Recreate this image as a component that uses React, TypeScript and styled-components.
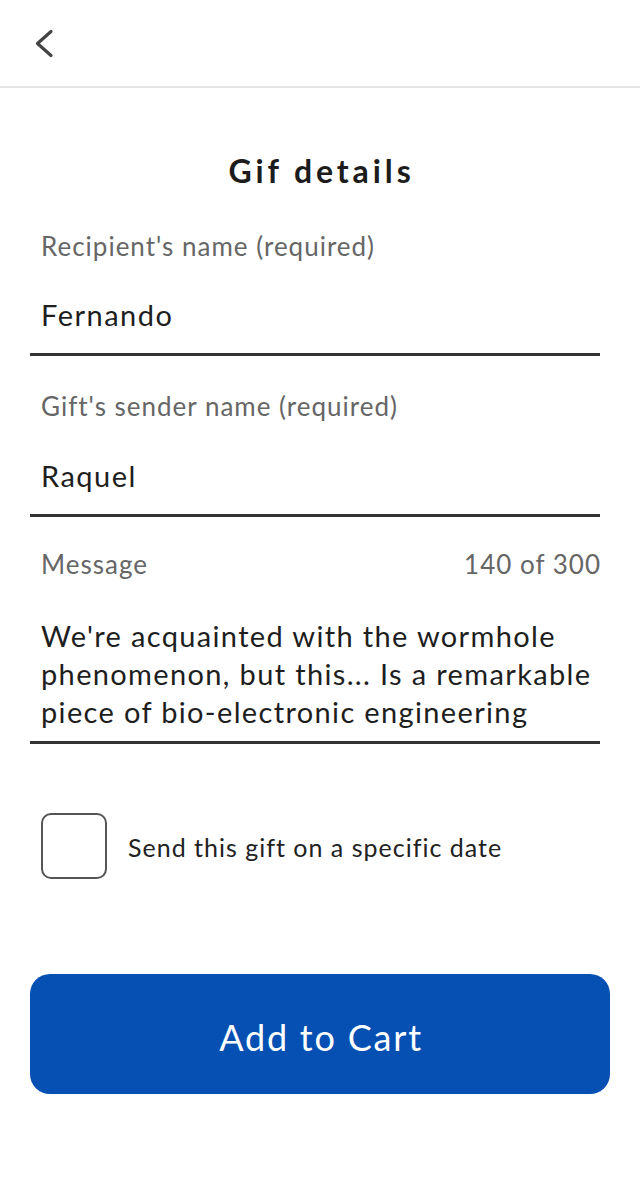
import React from "react";
import styled, { createGlobalStyle } from "styled-components";

const GlobalStyle = createGlobalStyle`
  html, body {
    margin: 0;
    padding: 0;
    background: #ffffff;
  }
  body {
    font-family: Lato, "Open Sans", Arial, sans-serif;
    color: #222222;
  }
  * { box-sizing: border-box; }
`;

const Page = styled.div`
  width: 640px;
  min-height: 1180px;
  background: #ffffff;
  display: flex;
  flex-direction: column;
`;

const Header = styled.header`
  height: 88px;
  border-bottom: 2px solid #e6e6e6;
  display: flex;
  align-items: flex-start;
  padding: 27px 0 0 33px;
`;

const BackButton = styled.button`
  width: 24px;
  height: 33px;
  padding: 0;
  border: none;
  background: transparent;
  display: flex;
  align-items: center;
  justify-content: center;
  cursor: pointer;
`;

const Main = styled.main`
  padding: 0 30px;
  display: flex;
  flex-direction: column;
`;

const Title = styled.h1`
  margin: 63px 0 0;
  padding-left: 3px;
  font-family: Lato, sans-serif;
  font-size: 32px;
  line-height: 40px;
  font-weight: 700;
  letter-spacing: 3.9px;
  text-align: center;
  color: #1c1c1c;
`;

const Form = styled.form`
  margin-top: 40px;
  margin-right: 10px;
  display: flex;
  flex-direction: column;
`;

const Field = styled.label<{ $gap?: number; $padBottom?: number }>`
  display: flex;
  flex-direction: column;
  margin-bottom: ${(p) => p.$gap ?? 34}px;
  border-bottom: 3px solid #333333;
  padding-bottom: ${(p) => p.$padBottom ?? 19}px;
`;

const LabelRow = styled.div`
  display: flex;
  justify-content: space-between;
  align-items: baseline;
  padding-left: 11px;
`;

const LabelText = styled.span<{ $end?: boolean }>`
  font-size: 26px;
  line-height: 30px;
  letter-spacing: 1px;
  color: #666666;
  margin-right: ${(p) => (p.$end ? "-1px" : "0")};
`;

const Input = styled.input<{ $offset?: number }>`
  margin-top: ${(p) => p.$offset ?? 34}px;
  padding: 0 0 0 11px;
  border: none;
  outline: none;
  background: transparent;
  font-family: Lato, sans-serif;
  font-size: 29px;
  line-height: 38px;
  letter-spacing: 1.5px;
  height: 38px;
  color: #1e1e1e;
  width: 100%;
`;

const TextArea = styled.textarea`
  margin-top: 38px;
  padding: 0 0 0 11px;
  border: none;
  outline: none;
  background: transparent;
  resize: none;
  overflow: hidden;
  font-family: Lato, sans-serif;
  font-size: 29px;
  line-height: 38px;
  letter-spacing: 1.35px;
  height: 114px;
  color: #1e1e1e;
  width: 100%;
  display: block;
`;

const CheckRow = styled.label`
  margin-top: 69px;
  padding-left: 11px;
  display: flex;
  align-items: center;
  gap: 21px;
  cursor: pointer;
`;

const CheckBox = styled.input`
  appearance: none;
  -webkit-appearance: none;
  margin: 0;
  width: 66px;
  height: 66px;
  border: 2px solid #555555;
  border-radius: 10px;
  background: #ffffff;
  flex: 0 0 auto;
`;

const CheckLabel = styled.span`
  font-size: 25px;
  line-height: 30px;
  letter-spacing: 1px;
  color: #222222;
  padding-top: 2px;
`;

const CartButton = styled.button`
  margin-top: 95px;
  height: 120px;
  width: 100%;
  padding: 5px 0 0 2px;
  border: none;
  border-radius: 20px;
  background: #0650b4;
  color: #ffffff;
  font-family: Lato, sans-serif;
  font-size: 36px;
  font-weight: 400;
  letter-spacing: 1.8px;
  cursor: pointer;
`;

const message =
  "We're acquainted with the wormhole phenomenon, but this... Is a remarkable piece of bio-electronic engineering";

export default function App() {
  return (
    <Page>
      <GlobalStyle />
      <Header>
        <BackButton aria-label="Back">
          <svg width="24" height="33" viewBox="0 0 24 33" fill="none">
            <path
              d="M18 4.5 L4.5 16.5 L18 28.5"
              stroke="#444444"
              strokeWidth="3.2"
              strokeLinecap="round"
              strokeLinejoin="round"
            />
          </svg>
        </BackButton>
      </Header>
      <Main>
        <Title>Gif details</Title>
        <Form onSubmit={(e) => e.preventDefault()}>
          <Field $gap={35}>
            <LabelRow>
              <LabelText>Recipient's name (required)</LabelText>
            </LabelRow>
            <Input defaultValue="Fernando" $offset={35} />
          </Field>
          <Field $gap={32}>
            <LabelRow>
              <LabelText>Gift's sender name (required)</LabelText>
            </LabelRow>
            <Input defaultValue="Raquel" $offset={36} />
          </Field>
          <Field $gap={0} $padBottom={10}>
            <LabelRow>
              <LabelText>Message</LabelText>
              <LabelText $end>140 of 300</LabelText>
            </LabelRow>
            <TextArea rows={3} defaultValue={message} />
          </Field>
        </Form>
        <CheckRow>
          <CheckBox type="checkbox" />
          <CheckLabel>Send this gift on a specific date</CheckLabel>
        </CheckRow>
        <CartButton type="button">Add to Cart</CartButton>
      </Main>
    </Page>
  );
}
